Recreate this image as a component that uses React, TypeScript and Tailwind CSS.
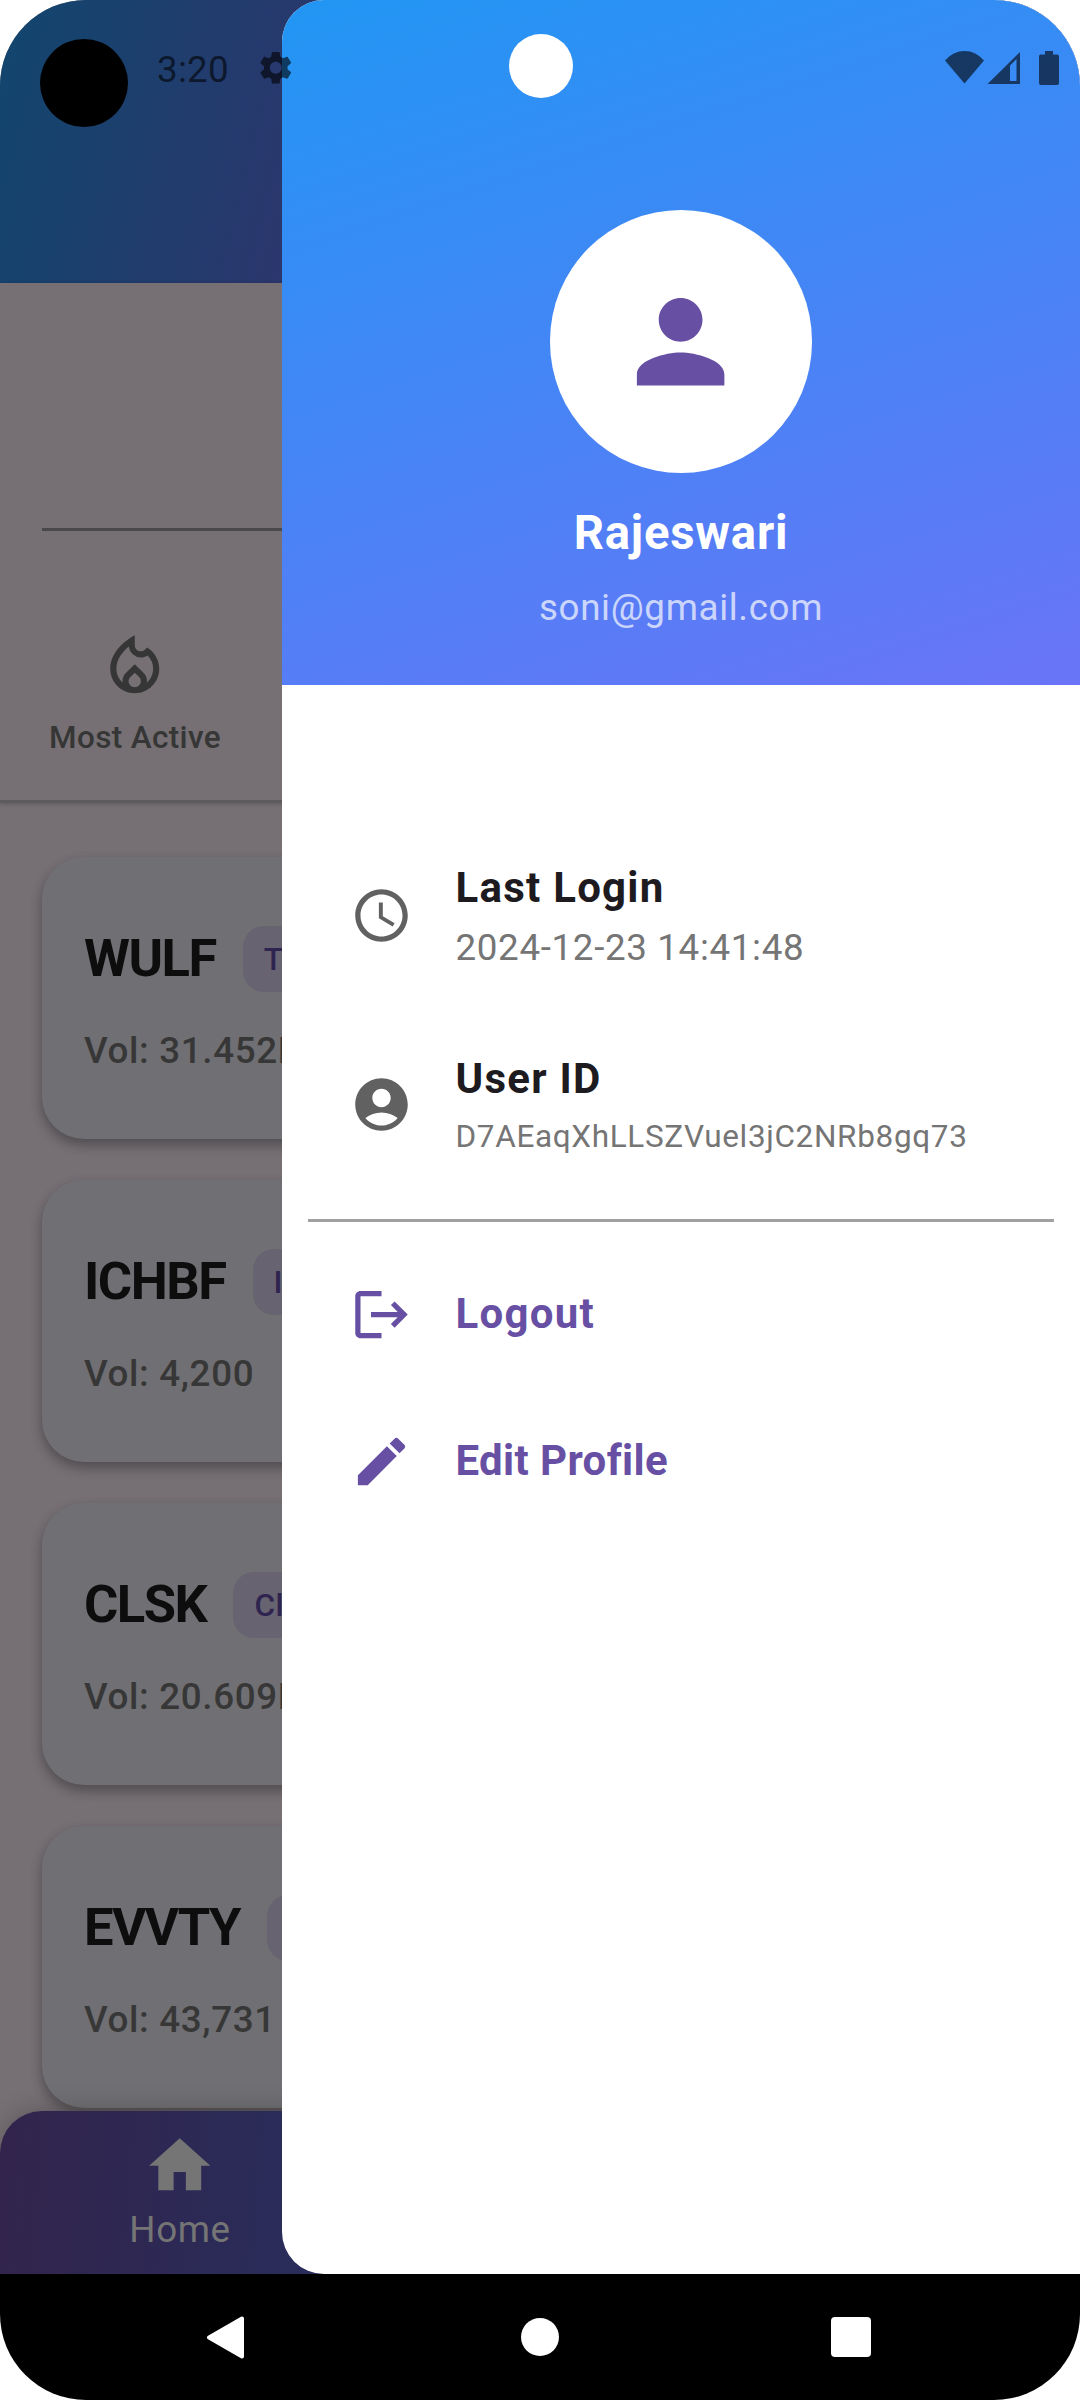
import React from "react";
import {
  MdAccessTime,
  MdHome,
  MdOutlineLocalFireDepartment,
  MdPerson,
  MdSettings,
} from "react-icons/md";

type Stock = { symbol: string; name: string; volume: string };

const STOCKS: Stock[] = [
  { symbol: "WULF", name: "TeraWulf Inc.", volume: "31.452M" },
  { symbol: "ICHBF", name: "Industrial", volume: "4,200" },
  { symbol: "CLSK", name: "CleanSpark, Inc.", volume: "20.609M" },
  { symbol: "EVVTY", name: "Evolution AB", volume: "43,731" },
];

function StockCard({ symbol, name, volume }: Stock) {
  return (
    <div className="h-[282px] shrink-0 rounded-[42px] bg-[#706f73] px-[42px] pt-[69px] shadow-[0_6px_12px_rgba(0,0,0,0.26),0_5px_14px_rgba(0,0,0,0.08)]">
      <div className="flex h-[66px] items-center gap-[27px]">
        <span className="-mt-[3px] text-[52.5px] leading-[64px] font-bold tracking-[-1.5px] text-[#0d0d0e]">
          {symbol}
        </span>
        <span className="flex h-[66px] items-center rounded-[21px] bg-[#676371] px-[21px] pt-[2px] text-[31.5px] font-medium tracking-[0.35px] whitespace-nowrap text-[#2f2450]">
          {name}
        </span>
      </div>
      <div className="mt-[38px] text-[36.75px] leading-[42px] font-medium tracking-[0.65px] text-[#373737]">
        Vol: {volume}
      </div>
    </div>
  );
}

function AccountCircleIcon() {
  return (
    <svg viewBox="0 0 24 24" className="mt-[2px] size-[63px] fill-[#616161]">
      <path d="M12 2C6.48 2 2 6.48 2 12s4.48 10 10 10 10-4.48 10-10S17.52 2 12 2zm0 4c1.93 0 3.5 1.57 3.5 3.5S13.93 13 12 13s-3.5-1.57-3.5-3.5S10.07 6 12 6zm0 14c-2.03 0-4.43-.82-6.14-2.88C7.55 15.8 9.68 15 12 15s4.45.8 6.14 2.12C16.43 19.18 14.03 20 12 20z" />
    </svg>
  );
}

function LogoutIcon() {
  return (
    <svg viewBox="0 0 24 24" className="size-[63px] fill-[#6750a4]">
      <path d="M17 7l-1.41 1.41L18.17 11H8v2h10.17l-2.58 2.58L17 17l5-5M4 5h8V3H4c-1.1 0-2 .9-2 2v14c0 1.1.9 2 2 2h8v-2H4V5z" />
    </svg>
  );
}

function PencilIcon() {
  return (
    <svg viewBox="0 0 24 24" className="size-[63px] fill-[#6750a4]">
      <path d="M20.71 7.04c.39-.39.39-1.04 0-1.41l-2.34-2.34c-.37-.39-1.02-.39-1.41 0l-1.84 1.83 3.75 3.75M3 17.25V21h3.75L17.81 9.93l-3.75-3.75L3 17.25z" />
    </svg>
  );
}

function Backdrop() {
  return (
    <div className="flex h-full flex-col bg-[#767074]">
      <div className="h-[283px] shrink-0 bg-[linear-gradient(104.7deg,#11466e_0%,#2b366d_31%,#3a2f6c_50%)]" />
      <div className="flex h-[520px] shrink-0 flex-col border-b-[3px] border-[#5c5b5d] shadow-[0_1px_4px_rgba(0,0,0,0.2)]">
        <div className="mt-[245px] ml-[42px] h-[3px] shrink-0 bg-[#49494b]" />
        <div className="mt-[98px] flex w-[270px] flex-col items-center text-[#353635]">
          <MdOutlineLocalFireDepartment className="size-[73.5px]" />
          <span className="mt-[15px] text-[31.5px] leading-[40px] font-medium tracking-[0.35px]">
            Most Active
          </span>
        </div>
      </div>
      <div className="flex h-[1308px] shrink-0 flex-col gap-[41px] overflow-hidden px-[42px] pt-[54px]">
        {STOCKS.map((s) => (
          <StockCard key={s.symbol} {...s} />
        ))}
      </div>
      <div className="h-[163px] shrink-0 rounded-t-[42px] bg-[linear-gradient(95deg,#32244c_0px,#292d5b_330px)] pt-[18px] shadow-[0_-2px_24px_rgba(0,0,0,0.2)]">
        <div className="flex w-[360px] flex-col items-center text-[#757575]">
          <MdHome className="size-[73.5px]" />
          <span className="mt-[5.5px] text-[36.75px] leading-[44px] tracking-[0.6px]">Home</span>
        </div>
      </div>
    </div>
  );
}

function InfoRow({
  icon,
  title,
  children,
}: {
  icon: React.ReactNode;
  title: string;
  children: React.ReactNode;
}) {
  return (
    <div className="flex items-center gap-[43px] pl-[67.5px]">
      {icon}
      <div className="flex flex-col">
        <span className="text-[42px] leading-[60px] font-bold tracking-[1.25px] text-[#1d1b20]">
          {title}
        </span>
        {children}
      </div>
    </div>
  );
}

function Drawer() {
  return (
    <aside className="flex h-full flex-col overflow-hidden rounded-l-[42px] bg-white">
      <div className="flex h-[685px] shrink-0 flex-col items-center bg-[linear-gradient(162deg,#2196f3_0%,#6a74f7_100%)] pt-[210px]">
        <div className="flex size-[262.5px] items-center justify-center rounded-full bg-white">
          <MdPerson className="size-[131.25px] text-[#6750a4]" />
        </div>
        <span className="mt-[30.5px] text-[47.25px] leading-[60px] font-bold tracking-[0.8px] text-white">
          Rajeswari
        </span>
        <span className="mt-[20px] text-[36.75px] leading-[50px] tracking-[0.65px] text-white/70">
          soni@gmail.com
        </span>
      </div>
      <div className="mt-[173px]">
        <InfoRow icon={<MdAccessTime className="size-[63px] text-[#616161]" />} title="Last Login">
          <span className="mt-[4.5px] text-[36.75px] leading-[50px] tracking-[0.65px] text-[#757575]">
            2024-12-23 14:41:48
          </span>
        </InfoRow>
      </div>
      <div className="mt-[76px]">
        <InfoRow icon={<AccountCircleIcon />} title="User ID">
          <span className="mt-[7px] text-[31.5px] leading-[42px] tracking-[0.66px] text-[#757575]">
            D7AEaqXhLLSZVuel3jC2NRb8gq73
          </span>
        </InfoRow>
      </div>
      <div className="mx-[26px] mt-[61px] h-[3px] shrink-0 bg-[#a0a0a0]" />
      <div className="mt-[61.5px] flex items-center gap-[43px] pl-[67.5px]">
        <LogoutIcon />
        <span className="-mt-[2px] text-[42px] leading-[60px] font-bold tracking-[1.25px] text-[#6750a4]">
          Logout
        </span>
      </div>
      <div className="mt-[84px] flex items-center gap-[43px] pl-[67.5px]">
        <PencilIcon />
        <span className="-mt-[2px] text-[42px] leading-[60px] font-bold tracking-[0.37px] text-[#6750a4]">
          Edit Profile
        </span>
      </div>
    </aside>
  );
}

function StatusBar() {
  return (
    <div className="flex h-[136px] items-center text-black/60">
      <div className="ml-[40px] mt-[30px] size-[88px] rounded-full bg-black" />
      <span className="mt-[4px] ml-[29px] text-[36.75px] leading-[44px] tracking-[0.25px]">
        3:20
      </span>
      <MdSettings className="ml-[27px] size-[39.5px]" />
      <div className="-mt-[5px] ml-[213.5px] size-[64px] rounded-full bg-white" />
      <svg
        viewBox="0 0 115 34"
        className="ml-[372.5px] h-[34px] w-[115px] fill-current"
      >
        <path d="M0 9.5Q8 0 19.5 0T39 9.5L19.5 32.5z" />
        <path
          fillRule="evenodd"
          d="M42.5 33L75 1v32zM65 14.5V30h6.5V8z"
        />
        <path d="M100 0h8v3.5h4.2q1.8 0 1.8 1.8v26.9q0 1.8-1.8 1.8H95.8q-1.8 0-1.8-1.8V5.3q0-1.8 1.8-1.8H100z" />
      </svg>
    </div>
  );
}

function NavigationBar() {
  return (
    <div className="flex h-[126px] items-center bg-black">
      <svg viewBox="0 0 37 43" className="ml-[207px] h-[43px] w-[37px]">
        <path
          d="M35 2.5V40.5L2 21.5z"
          fill="white"
          stroke="white"
          strokeWidth="4"
          strokeLinejoin="round"
        />
      </svg>
      <div className="ml-[277px] size-[38px] rounded-full bg-white" />
      <div className="ml-[272px] size-[40px] rounded-[4px] bg-white" />
    </div>
  );
}

export default function App() {
  return (
    <div className="h-[2400px] w-[1080px] bg-white font-[Roboto,sans-serif]">
      <div className="flex h-full flex-col overflow-hidden rounded-[86px]">
        <div className="relative h-[2274px] shrink-0 overflow-hidden">
          <Backdrop />
          <div className="absolute inset-y-0 right-0 w-[798px]">
            <Drawer />
          </div>
          <div className="absolute inset-x-0 top-0">
            <StatusBar />
          </div>
        </div>
        <NavigationBar />
      </div>
    </div>
  );
}
